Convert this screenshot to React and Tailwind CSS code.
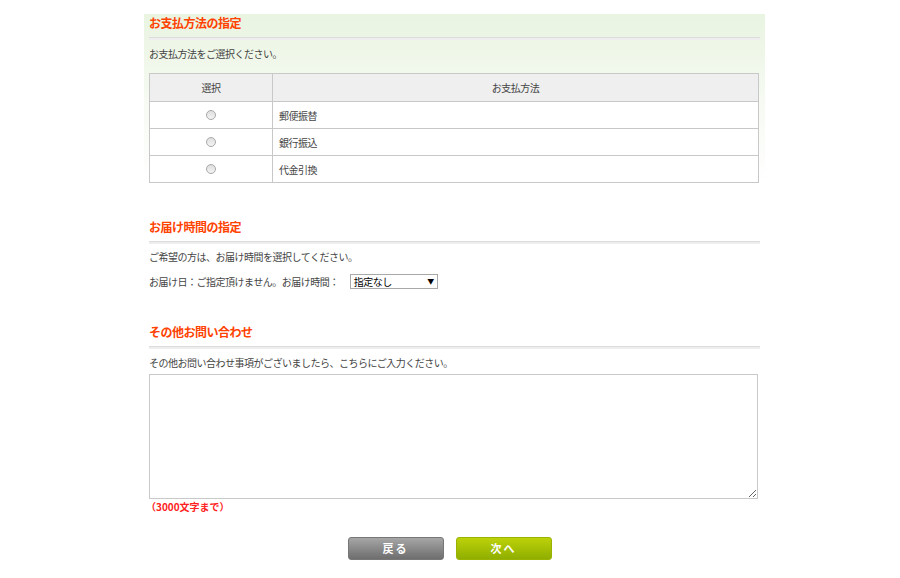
import React, { useState } from 'react';

const font = { fontFamily: '"Noto Sans CJK JP", "Noto Sans", sans-serif' };

function SectionTitle({ children }) {
    return (
        <div className="mx-[5px]">
            <h2 className="text-[12px] font-bold text-[#ff4200] leading-[16px] pb-[6px]">{children}</h2>
            <div className="h-[3px] border-t border-[#dcdcdc] bg-[#eeeeee]" />
        </div>
    );
}

function Radio({ checked, onChange }) {
    return (
        <button
            onClick={onChange}
            className="w-[10px] h-[10px] rounded-full border border-[#a9a9a9] bg-gradient-to-b from-[#dedede] to-[#f4f4f4] flex items-center justify-center"
        >
            {checked && <span className="w-[4px] h-[4px] rounded-full bg-[#333]" />}
        </button>
    );
}

export default function App() {
    const [method, setMethod] = useState(null);
    const methods = ['郵便振替', '銀行振込', '代金引換'];

    return (
        <div className="w-[900px] h-[578px] bg-white text-[#444] text-[10px] tracking-[-0.5px] overflow-hidden" style={font}>
            <div className="ml-[144px] w-[621px] pt-[14px]">
                {/* Payment */}
                <div className="bg-gradient-to-b from-[#e9f4e1] via-[#f6faf2] via-50% to-white pt-[1px]">
                    <SectionTitle>お支払方法の指定</SectionTitle>
                    <p className="mx-[5px] mt-[7px] leading-[14px]">お支払方法をご選択ください。</p>
                    <table className="ml-[5px] mt-[12px] w-[610px] border-collapse border border-[#c8c8c8]">
                        <thead>
                            <tr className="bg-[#efefef] h-[28px]">
                                <th className="w-[123px] border border-[#c8c8c8] font-normal">選択</th>
                                <th className="border border-[#c8c8c8] font-normal">お支払方法</th>
                            </tr>
                        </thead>
                        <tbody className="bg-white">
                            {methods.map((m, i) => (
                                <tr key={m} className="h-[27px]">
                                    <td className="border border-[#c8c8c8]">
                                        <div className="flex justify-center">
                                            <Radio checked={method === i} onChange={() => setMethod(i)} />
                                        </div>
                                    </td>
                                    <td className="border border-[#c8c8c8] pl-[6px]">{m}</td>
                                </tr>
                            ))}
                        </tbody>
                    </table>
                </div>

                {/* Delivery time */}
                <div className="mt-[36px]">
                    <SectionTitle>お届け時間の指定</SectionTitle>
                    <p className="mx-[5px] mt-[6px] leading-[14px]">ご希望の方は、お届け時間を選択してください。</p>
                    <div className="mx-[5px] mt-[10px] flex items-center gap-[11px]">
                        <span>お届け日：ご指定頂けません。お届け時間：</span>
                        <div className="w-[88px] h-[15px] border border-[#a9a9a9] flex items-center justify-between px-[3px] text-black">
                            <span>指定なし</span>
                            <span className="text-[7px]">▼</span>
                        </div>
                    </div>
                </div>

                {/* Inquiry */}
                <div className="mt-[35px]">
                    <SectionTitle>その他お問い合わせ</SectionTitle>
                    <p className="mx-[5px] mt-[7px] leading-[14px]">その他お問い合わせ事項がございましたら、こちらにご入力ください。</p>
                    <textarea className="block ml-[5px] mt-[4px] w-[609px] h-[125px] border border-[#c9c9c9] outline-none resize-y" />
                    <p className="ml-[2px] mt-[1px] text-[10px] font-bold text-[#ff2222] leading-[14px] tracking-normal">（3000文字まで）</p>
                </div>

                {/* Buttons */}
                <div className="mt-[23px] flex justify-center gap-[12px] pr-[10px]">
                    <button className="w-[96px] h-[23px] rounded-[3px] bg-gradient-to-b from-[#a6a6a6] to-[#6e6e6e] border border-[#777] text-white text-[11px] font-bold tracking-[2px]">
                        戻る
                    </button>
                    <button className="w-[96px] h-[23px] rounded-[3px] bg-gradient-to-b from-[#bcd20a] to-[#8fae00] border border-[#9ab300] text-white text-[11px] font-bold tracking-[2px]">
                        次へ
                    </button>
                </div>
            </div>
        </div>
    );
}
